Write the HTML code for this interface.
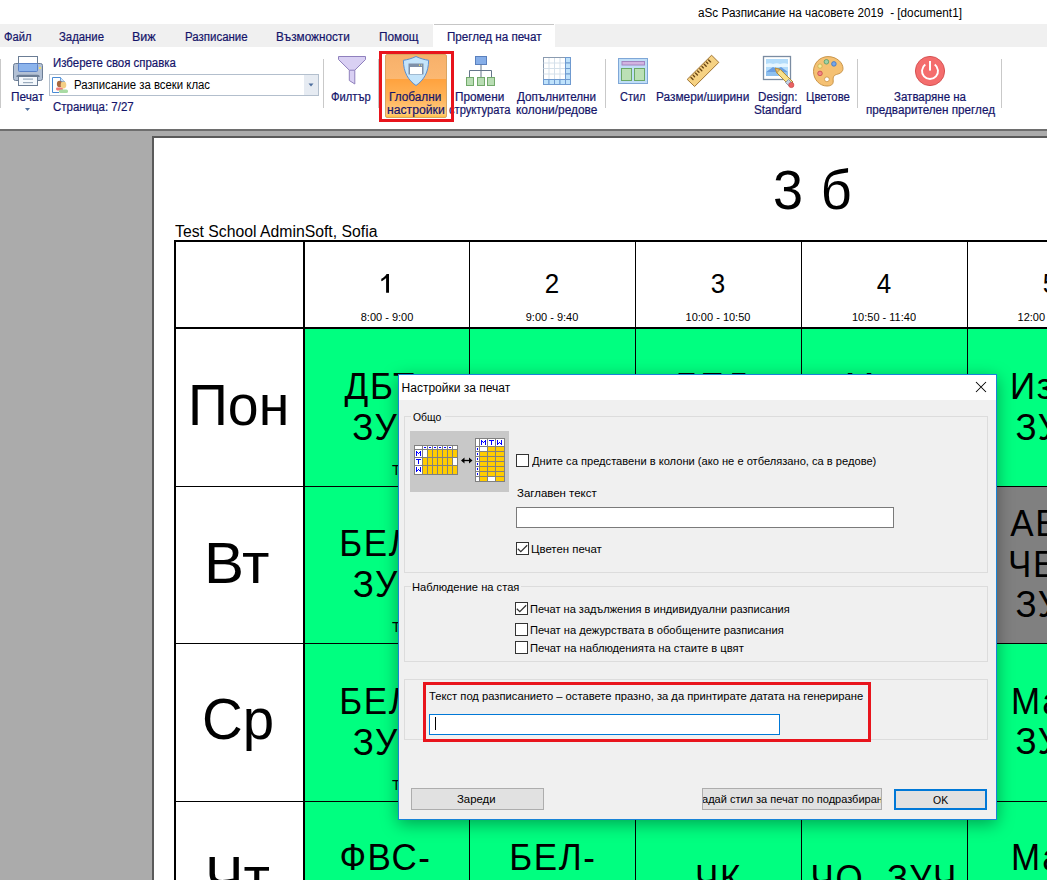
<!DOCTYPE html><html><head><meta charset="utf-8"><style>
html,body{margin:0;padding:0;}
body{width:1047px;height:880px;overflow:hidden;position:relative;background:#ababab;font-family:"Liberation Sans",sans-serif;}
div{box-sizing:border-box;}
svg{position:absolute;overflow:visible;}
.u{-webkit-text-stroke:0.2px currentColor;}
</style></head><body>
<div style="position:absolute;left:0px;top:0px;width:1047px;height:24px;background:#fff"></div>
<div style="position:absolute;left:697.62px;top:7.24px;font-size:12px;line-height:12px;color:#000;white-space:pre;letter-spacing:0px;transform:scale(0.9780,1.0);transform-origin:0 10.16px;">aSc Разписание на часовете 2019  - [document1]</div>
<div style="position:absolute;left:0px;top:24px;width:1047px;height:23px;background:#f0f0f0"></div>
<div style="position:absolute;left:433px;top:24px;width:122px;height:23px;background:#fff"></div>
<div style="position:absolute;left:434px;top:24px;width:120px;height:1px;background:#c6c6c6"></div>
<div class="u" style="position:absolute;left:3.77px;top:30.84px;font-size:12px;line-height:12px;color:#14146a;white-space:pre;letter-spacing:0px;transform:scale(0.9321,1.0);transform-origin:0 10.16px;">Файл</div>
<div class="u" style="position:absolute;left:59.25px;top:30.84px;font-size:12px;line-height:12px;color:#14146a;white-space:pre;letter-spacing:0px;transform:scale(0.9457,1.0);transform-origin:0 10.16px;">Задание</div>
<div class="u" style="position:absolute;left:131.96px;top:30.84px;font-size:12px;line-height:12px;color:#14146a;white-space:pre;letter-spacing:0px;transform:scale(1.0409,1.0);transform-origin:0 10.16px;">Виж</div>
<div class="u" style="position:absolute;left:184.64px;top:30.84px;font-size:12px;line-height:12px;color:#14146a;white-space:pre;letter-spacing:0px;transform:scale(0.9563,1.0);transform-origin:0 10.16px;">Разписание</div>
<div class="u" style="position:absolute;left:276.02px;top:30.84px;font-size:12px;line-height:12px;color:#14146a;white-space:pre;letter-spacing:0px;transform:scale(0.9797,1.0);transform-origin:0 10.16px;">Възможности</div>
<div class="u" style="position:absolute;left:378.62px;top:30.84px;font-size:12px;line-height:12px;color:#14146a;white-space:pre;letter-spacing:0px;transform:scale(0.9846,1.0);transform-origin:0 10.16px;">Помощ</div>
<div class="u" style="position:absolute;left:446.93px;top:30.84px;font-size:12px;line-height:12px;color:#14146a;white-space:pre;letter-spacing:0px;transform:scale(0.9698,1.0);transform-origin:0 10.16px;">Преглед на печат</div>
<div style="position:absolute;left:0px;top:47px;width:1047px;height:82px;background:#fff"></div>
<div style="position:absolute;left:0px;top:129px;width:1047px;height:2px;background:#6e6e6e"></div>
<div style="position:absolute;left:0px;top:59px;width:1px;height:49px;background:#c9c9c9"></div>
<div style="position:absolute;left:323px;top:59px;width:1px;height:49px;background:#c9c9c9"></div>
<div style="position:absolute;left:378px;top:59px;width:1px;height:49px;background:#c9c9c9"></div>
<div style="position:absolute;left:605px;top:59px;width:1px;height:49px;background:#c9c9c9"></div>
<div style="position:absolute;left:857px;top:59px;width:1px;height:49px;background:#c9c9c9"></div>
<div style="position:absolute;left:1001px;top:59px;width:1px;height:49px;background:#c9c9c9"></div>
<svg style="left:0;top:0" width="1047" height="130" viewBox="0 0 1047 130">
<!-- printer -->
<rect x="18.5" y="56.5" width="19" height="9" fill="#fff" stroke="#6b7d95" stroke-width="1"/>
<path d="M15.5 63.5 H40.5 Q42.5 63.5 42.5 65.5 V78.5 Q42.5 80.5 40.5 80.5 H15.5 Q13.5 80.5 13.5 78.5 V65.5 Q13.5 63.5 15.5 63.5 Z" fill="#b3c1d5" stroke="#6b7d95" stroke-width="1"/>
<rect x="18.5" y="63.5" width="19" height="8" rx="1" fill="#8cb4ec" stroke="#5a82c8" stroke-width="1"/>
<rect x="39" y="67" width="2" height="2" fill="#f3dc6a"/>
<path d="M17 77 Q17 75.5 18.5 75.5 H37.5 Q39 75.5 39 77" fill="none" stroke="#6b7d95" stroke-width="1.6"/>
<rect x="18.5" y="76.5" width="19" height="9" fill="#f4f8fc" stroke="#6b7d95" stroke-width="1"/>
<rect x="23" y="78.5" width="10" height="1.2" fill="#9aabbd"/>
<rect x="23" y="82" width="10" height="1.2" fill="#9aabbd"/>
<path d="M25 108 L30 108 L27.5 111 Z" fill="#4e6f9e"/>
<!-- combo -->
<rect x="49.5" y="74.5" width="269" height="21" fill="#fff" stroke="#b3bfcd" stroke-width="1"/>
<rect x="304" y="75" width="14" height="20" fill="#e6ebf2"/>
<path d="M308.5 83.5 L313.5 83.5 L311 86.5 Z" fill="#4e6f9e"/>
<path d="M64.5 82 L60.5 77.5 H52.5 V92.5 H59" fill="none" stroke="#4a8ad4" stroke-width="1"/>
<path d="M60.5 77.5 V81.5 H64.5" fill="#cfe4f8" stroke="#4a8ad4" stroke-width="0.8"/>
<ellipse cx="59.5" cy="84" rx="2.6" ry="3.2" fill="#a8683f"/>
<rect x="56" y="87.5" width="7" height="3" rx="1.4" fill="#f07a7a"/>
<ellipse cx="63.5" cy="85" rx="2.8" ry="3.4" fill="#f4cf86"/>
<rect x="59" y="89.5" width="9" height="3.5" rx="1.6" fill="#a8dba4"/>
<!-- funnel -->
<path d="M338.5 56.5 H365.5 V59.5 L354.8 70.2 V84 L349.3 80.5 V70.2 L338.5 59.5 Z" fill="#d9d0f3" stroke="#8f80bd" stroke-width="1" stroke-linejoin="round"/>
<path d="M349.3 70.2 H354.8" stroke="#8f80bd" stroke-width="1"/>
</svg>
<div class="u" style="position:absolute;left:11.42px;top:90.84px;font-size:12px;line-height:12px;color:#14146a;white-space:pre;letter-spacing:0px;transform:scale(0.9844,1.0);transform-origin:0 10.16px;">Печат</div>
<div class="u" style="position:absolute;left:52.55px;top:56.84px;font-size:12px;line-height:12px;color:#14146a;white-space:pre;letter-spacing:0px;transform:scale(0.9539,1.0);transform-origin:0 10.16px;">Изберете своя справка</div>
<div style="position:absolute;left:73.55px;top:78.64px;font-size:12px;line-height:12px;color:#000;white-space:pre;letter-spacing:0px;transform:scale(0.9472,1.0);transform-origin:0 10.16px;">Разписание за всеки клас</div>
<div class="u" style="position:absolute;left:52.54px;top:101.14px;font-size:12px;line-height:12px;color:#14146a;white-space:pre;letter-spacing:0px;transform:scale(0.9554,1.0);transform-origin:0 10.16px;">Страница: 7/27</div>
<div class="u" style="position:absolute;left:330.87px;top:90.84px;font-size:12px;line-height:12px;color:#14146a;white-space:pre;letter-spacing:0px;transform:scale(0.9317,1.0);transform-origin:0 10.16px;">Филтър</div>
<div style="position:absolute;left:379px;top:51px;width:75px;height:71px;border:3px solid #e8141c;z-index:5"></div>
<div style="position:absolute;left:385px;top:54px;width:62px;height:64px;border:1px solid #d9a461;border-radius:2px;background:linear-gradient(#f7b06a 0%,#fbb872 38%,#ffa23e 39%,#ffb459 70%,#ffcd85 94%,#ffc040 100%)"></div>
<svg style="left:0;top:0" width="1047" height="130" viewBox="0 0 1047 130">
<path d="M416 56.5 C420 58.5 425 59.8 428.6 60.3 C428.6 72 424 80 416 85.5 C408 80 403.4 72 403.4 60.3 C407 59.8 412 58.5 416 56.5 Z" fill="#c4e4fa" stroke="#5a8fd0" stroke-width="1"/>
<rect x="408.5" y="63.5" width="15" height="11" fill="#7f90a8"/>
<rect x="410" y="67" width="12" height="7" fill="#fff"/>
<rect x="419" y="64.5" width="1" height="1.5" fill="#e8d870"/><rect x="421" y="64.5" width="1" height="1.5" fill="#c0c8a0"/>
<!-- hierarchy -->
<rect x="475.5" y="56.5" width="11" height="8" fill="#86aee8" stroke="#5a80bd" stroke-width="1"/>
<path d="M481 64.5 V70.5 M469.5 78 V70.5 H491.5 V78 M481 70.5 V78" fill="none" stroke="#65768a" stroke-width="1"/>
<rect x="466.5" y="77.5" width="7" height="8" fill="#b9ddb4" stroke="#72a96b" stroke-width="1"/>
<rect x="477.5" y="77.5" width="7" height="8" fill="#b9ddb4" stroke="#72a96b" stroke-width="1"/>
<rect x="487.5" y="77.5" width="7" height="8" fill="#b9ddb4" stroke="#72a96b" stroke-width="1"/>
</svg>
<div class="u" style="position:absolute;left:389.32px;top:90.84px;font-size:12px;line-height:12px;color:#14146a;white-space:pre;letter-spacing:0px;transform:scale(0.9808,1.0);transform-origin:0 10.16px;">Глобални</div>
<div class="u" style="position:absolute;left:386.68px;top:103.84px;font-size:12px;line-height:12px;color:#14146a;white-space:pre;letter-spacing:0px;transform:scale(1.0164,1.0);transform-origin:0 10.16px;">настройки</div>
<div class="u" style="position:absolute;left:455.02px;top:91.04px;font-size:12px;line-height:12px;color:#14146a;white-space:pre;letter-spacing:0px;transform:scale(0.9796,1.0);transform-origin:0 10.16px;">Промени</div>
<div class="u" style="position:absolute;left:449.00px;top:104.04px;font-size:12px;line-height:12px;color:#14146a;white-space:pre;letter-spacing:0px;transform:scale(0.9303,1.0);transform-origin:0 10.16px;">структурата</div>
<div class="u" style="position:absolute;left:517.20px;top:90.84px;font-size:12px;line-height:12px;color:#14146a;white-space:pre;letter-spacing:0px;transform:scale(0.9728,1.0);transform-origin:0 10.16px;">Допълнителни</div>
<div class="u" style="position:absolute;left:516.01px;top:103.84px;font-size:12px;line-height:12px;color:#14146a;white-space:pre;letter-spacing:0px;transform:scale(0.9938,1.0);transform-origin:0 10.16px;">колони/редове</div>
<svg style="left:0;top:0" width="1047" height="130" viewBox="0 0 1047 130">
<!-- grid -->
<rect x="543.5" y="57.5" width="27" height="27" fill="#fff" stroke="#8a9bb0" stroke-width="1"/>
<g stroke="#d5e0ea" stroke-width="1">
<path d="M549 58 V79 M554.5 58 V79 M560 58 V79 M543.5 63 H565 M543.5 68.5 H565 M543.5 74 H565"/>
</g>
<g fill="#bfe2fb" stroke="#6f9ad0" stroke-width="1">
<rect x="565.5" y="57.5" width="5" height="5.5"/><rect x="565.5" y="63" width="5" height="5.5"/><rect x="565.5" y="68.5" width="5" height="5.5"/><rect x="565.5" y="74" width="5" height="5.5"/>
<rect x="543.5" y="79.5" width="5.5" height="5"/><rect x="549" y="79.5" width="5.5" height="5"/><rect x="554.5" y="79.5" width="5.5" height="5"/><rect x="560" y="79.5" width="5.5" height="5"/><rect x="565.5" y="79.5" width="5" height="5"/>
</g>
<!-- style -->
<rect x="618.5" y="58.5" width="29" height="25" fill="#c0def7" stroke="#7fa7d7" stroke-width="1"/>
<rect x="622" y="61.5" width="22.5" height="3.5" fill="#d2b3e0" stroke="#a283c0" stroke-width="1"/>
<rect x="621.5" y="68.5" width="10" height="12" fill="#bbe0b6" stroke="#6aa865" stroke-width="1"/>
<rect x="634.5" y="68.5" width="10" height="12" fill="#bbe0b6" stroke="#6aa865" stroke-width="1"/>
<!-- ruler -->
<path d="M687.2 79.4 L711.6 55.2 L718.8 62.4 L694.6 86.5 Z" fill="#f6d283" stroke="#a07432" stroke-width="1"/>
<g stroke="#6b4514" stroke-width="1.35" stroke-linecap="round">
<path d="M691 77.5 L693 79.5 M693.2 75.3 L694.6 76.7 M695.4 73.1 L697.4 75.1 M697.6 70.9 L699 72.3 M699.8 68.7 L701.8 70.7 M702 66.5 L703.4 67.9 M704.2 64.3 L706.2 66.3 M706.4 62.1 L707.8 63.5 M708.6 59.9 L710.6 61.9"/>
</g>
<!-- design picture -->
<rect x="763.5" y="56.5" width="27" height="23" fill="#fff" stroke="#7a8ca2" stroke-width="1.3"/>
<rect x="766" y="59" width="22" height="17" fill="#b3dcfa"/>
<path d="M766 64 Q770 62.5 773 64 Q777 62.5 780 64 Q784 62.5 788 64 V67 H766 Z" fill="#e6f6ff"/>
<path d="M766 72 L773 67 L777 69 L781 67 L788 72 V76 H766 Z" fill="#6a9ee0"/>
<rect x="766" y="72" width="22" height="4" fill="#8ec0ee"/>
<path d="M775.3 68.1 L780.5 69.6 L793 82 L789.5 85.5 L777 73 Z" fill="#f8e08a" stroke="#b08a3a" stroke-width="1" stroke-linejoin="round"/>
<path d="M775.3 68.1 L780 69.5 L776.7 72.8 Z" fill="#f0c070" stroke="#b08a3a" stroke-width="0.8"/>
<path d="M788.5 79.5 L792 83 L789 86 L785.5 82.5 Z" fill="#c4d4e6" stroke="#7a8ca2" stroke-width="0.8"/>
<circle cx="791.3" cy="85" r="2.6" fill="#ea6262" stroke="#c84848" stroke-width="0.7"/>
<!-- palette -->
<path d="M828 56.6 C836.5 56.6 843 62.5 843 68.5 C843 72 840 73.5 836.5 74.5 C833 75.5 833 78 833.2 81 C833.4 84.5 831 86 827 86 C819.5 86 813.5 79.5 813.5 71.3 C813.5 63 820 56.6 828 56.6 Z" fill="#f5c173" stroke="#c9954a" stroke-width="1"/>
<circle cx="826.4" cy="61.8" r="2.3" fill="#9ed0a8" stroke="#4f9a68" stroke-width="0.8"/>
<circle cx="833.9" cy="63.9" r="2.3" fill="#76a6ea" stroke="#3f73c0" stroke-width="0.8"/>
<circle cx="820" cy="66.1" r="2.2" fill="#f6ec9a" stroke="#c6b050" stroke-width="0.8"/>
<circle cx="820" cy="73.4" r="2.3" fill="#f08888" stroke="#c84848" stroke-width="0.8"/>
<circle cx="826.9" cy="79.3" r="2.4" fill="#fff" stroke="#c9954a" stroke-width="0.8"/>
<!-- power -->
<circle cx="930" cy="71" r="14.6" fill="#f46d6d" stroke="#d65353" stroke-width="1"/>
<path d="M925.3 64.6 A8 8 0 1 0 934.7 64.6" fill="none" stroke="#fff" stroke-width="1.9"/>
<rect x="929" y="61" width="2" height="9.6" fill="#fff"/>
</svg>
<div class="u" style="position:absolute;left:619.79px;top:90.64px;font-size:12px;line-height:12px;color:#14146a;white-space:pre;letter-spacing:0px;transform:scale(0.9115,1.0);transform-origin:0 10.16px;">Стил</div>
<div class="u" style="position:absolute;left:655.61px;top:90.64px;font-size:12px;line-height:12px;color:#14146a;white-space:pre;letter-spacing:0px;transform:scale(0.9892,1.0);transform-origin:0 10.16px;">Размери/ширини</div>
<div class="u" style="position:absolute;left:757.83px;top:91.04px;font-size:12px;line-height:12px;color:#14146a;white-space:pre;letter-spacing:0px;transform:scale(0.9692,1.0);transform-origin:0 10.16px;">Design:</div>
<div class="u" style="position:absolute;left:753.72px;top:104.14px;font-size:12px;line-height:12px;color:#14146a;white-space:pre;letter-spacing:0px;transform:scale(0.9766,1.0);transform-origin:0 10.16px;">Standard</div>
<div class="u" style="position:absolute;left:805.95px;top:91.04px;font-size:12px;line-height:12px;color:#14146a;white-space:pre;letter-spacing:0px;transform:scale(0.9467,1.0);transform-origin:0 10.16px;">Цветове</div>
<div class="u" style="position:absolute;left:894.04px;top:90.94px;font-size:12px;line-height:12px;color:#14146a;white-space:pre;letter-spacing:0px;transform:scale(0.9595,1.0);transform-origin:0 10.16px;">Затваряне на</div>
<div class="u" style="position:absolute;left:865.93px;top:104.14px;font-size:12px;line-height:12px;color:#14146a;white-space:pre;letter-spacing:0px;transform:scale(0.9733,1.0);transform-origin:0 10.16px;">предварителен преглед</div>
<div style="position:absolute;left:152px;top:136px;width:895px;height:744px;background:#fff;border-left:2px solid #5a5a5a;border-top:2px solid #5a5a5a"></div>
<div style="position:absolute;left:175.00px;top:224.26px;font-size:16px;line-height:16px;color:#000;white-space:pre;letter-spacing:0px;transform:scale(0.9854,1.04);transform-origin:0 13.54px;">Test School AdminSoft, Sofia</div>
<div style="position:absolute;top:163.09px;font-size:54px;line-height:54px;color:#000;white-space:pre;transform:scaleY(1.035);transform-origin:0 45.71px;left:773px;">3</div>
<div style="position:absolute;top:163.09px;font-size:54px;line-height:54px;color:#000;white-space:pre;transform:scaleY(1.035);transform-origin:0 45.71px;left:820.7px;">б</div>
<div style="position:absolute;left:305px;top:329px;width:164px;height:157px;background:#00ff80"></div>
<div style="position:absolute;left:470px;top:329px;width:165px;height:157px;background:#00ff80"></div>
<div style="position:absolute;left:636px;top:329px;width:165px;height:157px;background:#00ff80"></div>
<div style="position:absolute;left:802px;top:329px;width:165px;height:157px;background:#00ff80"></div>
<div style="position:absolute;left:968px;top:329px;width:79px;height:157px;background:#00ff80"></div>
<div style="position:absolute;left:305px;top:487px;width:164px;height:156px;background:#00ff80"></div>
<div style="position:absolute;left:470px;top:487px;width:165px;height:156px;background:#00ff80"></div>
<div style="position:absolute;left:636px;top:487px;width:165px;height:156px;background:#00ff80"></div>
<div style="position:absolute;left:802px;top:487px;width:165px;height:156px;background:#00ff80"></div>
<div style="position:absolute;left:968px;top:487px;width:79px;height:156px;background:#808080"></div>
<div style="position:absolute;left:305px;top:644px;width:164px;height:157px;background:#00ff80"></div>
<div style="position:absolute;left:470px;top:644px;width:165px;height:157px;background:#00ff80"></div>
<div style="position:absolute;left:636px;top:644px;width:165px;height:157px;background:#00ff80"></div>
<div style="position:absolute;left:802px;top:644px;width:165px;height:157px;background:#00ff80"></div>
<div style="position:absolute;left:968px;top:644px;width:79px;height:157px;background:#00ff80"></div>
<div style="position:absolute;left:305px;top:802px;width:164px;height:78px;background:#00ff80"></div>
<div style="position:absolute;left:470px;top:802px;width:165px;height:78px;background:#00ff80"></div>
<div style="position:absolute;left:636px;top:802px;width:165px;height:78px;background:#00ff80"></div>
<div style="position:absolute;left:802px;top:802px;width:165px;height:78px;background:#00ff80"></div>
<div style="position:absolute;left:968px;top:802px;width:79px;height:78px;background:#00ff80"></div>
<div style="position:absolute;left:174px;top:240px;width:873px;height:2px;background:#000"></div>
<div style="position:absolute;left:174px;top:240px;width:2px;height:640px;background:#000"></div>
<div style="position:absolute;left:176px;top:327px;width:871px;height:2px;background:#000"></div>
<div style="position:absolute;left:303px;top:242px;width:2px;height:638px;background:#000"></div>
<div style="position:absolute;left:469px;top:242px;width:1px;height:638px;background:#000"></div>
<div style="position:absolute;left:635px;top:242px;width:1px;height:638px;background:#000"></div>
<div style="position:absolute;left:801px;top:242px;width:1px;height:638px;background:#000"></div>
<div style="position:absolute;left:967px;top:242px;width:1px;height:638px;background:#000"></div>
<div style="position:absolute;left:176px;top:486px;width:871px;height:1px;background:#000"></div>
<div style="position:absolute;left:176px;top:643px;width:871px;height:1px;background:#000"></div>
<div style="position:absolute;left:176px;top:801px;width:871px;height:1px;background:#000"></div>
<div style="position:absolute;top:311.69px;font-size:11px;line-height:11px;color:#000;white-space:pre;transform:scaleY(1.04);transform-origin:0 9.31px;left:307.0px;width:160px;text-align:center;">8:00 - 9:00</div>
<div style="position:absolute;top:270.79px;font-size:26px;line-height:26px;color:#000;white-space:pre;transform:scaleY(1.04);transform-origin:0 22.01px;left:472.0px;width:160px;text-align:center;">2</div>
<div style="position:absolute;top:311.69px;font-size:11px;line-height:11px;color:#000;white-space:pre;transform:scaleY(1.04);transform-origin:0 9.31px;left:472.0px;width:160px;text-align:center;">9:00 - 9:40</div>
<div style="position:absolute;top:270.79px;font-size:26px;line-height:26px;color:#000;white-space:pre;transform:scaleY(1.04);transform-origin:0 22.01px;left:638.0px;width:160px;text-align:center;">3</div>
<div style="position:absolute;top:311.69px;font-size:11px;line-height:11px;color:#000;white-space:pre;transform:scaleY(1.04);transform-origin:0 9.31px;left:638.0px;width:160px;text-align:center;">10:00 - 10:50</div>
<div style="position:absolute;top:270.79px;font-size:26px;line-height:26px;color:#000;white-space:pre;transform:scaleY(1.04);transform-origin:0 22.01px;left:804.0px;width:160px;text-align:center;">4</div>
<div style="position:absolute;top:311.69px;font-size:11px;line-height:11px;color:#000;white-space:pre;transform:scaleY(1.04);transform-origin:0 9.31px;left:804.0px;width:160px;text-align:center;">10:50 - 11:40</div>
<div style="position:absolute;top:270.79px;font-size:26px;line-height:26px;color:#000;white-space:pre;transform:scaleY(1.04);transform-origin:0 22.01px;left:970.0px;width:160px;text-align:center;">5</div>
<div style="position:absolute;top:311.69px;font-size:11px;line-height:11px;color:#000;white-space:pre;transform:scaleY(1.04);transform-origin:0 9.31px;left:970.0px;width:160px;text-align:center;">12:00 - 12:40</div>
<svg style="left:0;top:0" width="1047" height="880" viewBox="0 0 1047 880"><path d="M386.1 292.8 V277.9 C384.8 279.2 383.1 280.4 381.3 281.2 V278.7 C383.4 277.6 385.4 276 386.6 273.9 H389 V292.8 Z" fill="#000"/></svg>
<div style="position:absolute;left:188.34px;top:378.40px;font-size:56px;line-height:56px;color:#000;white-space:pre;letter-spacing:0px;transform:scale(0.9905,1.04);transform-origin:0 47.40px;">Пон</div>
<div style="position:absolute;left:204.45px;top:536.10px;font-size:56px;line-height:56px;color:#000;white-space:pre;letter-spacing:0px;transform:scale(1.0709,1.04);transform-origin:0 47.40px;">Вт</div>
<div style="position:absolute;left:202.48px;top:692.40px;font-size:56px;line-height:56px;color:#000;white-space:pre;letter-spacing:0px;transform:scale(1.0076,1.04);transform-origin:0 47.40px;">Ср</div>
<div style="position:absolute;left:204.67px;top:850.10px;font-size:56px;line-height:56px;color:#000;white-space:pre;letter-spacing:0px;transform:scale(1.0328,1.04);transform-origin:0 47.40px;">Чт</div>
<div style="position:absolute;top:369.07px;font-size:35px;line-height:35px;color:#000;white-space:pre;transform:scaleY(1.04);transform-origin:0 29.63px;left:344.6px;letter-spacing:1.6px;">ДБТ-</div>
<div style="position:absolute;top:410.37px;font-size:35px;line-height:35px;color:#000;white-space:pre;transform:scaleY(1.04);transform-origin:0 29.63px;left:352.2px;letter-spacing:1.6px;">ЗУЧ</div>
<div style="position:absolute;top:462.95px;font-size:14px;line-height:14px;color:#000;white-space:pre;left:392px;">Т1</div>
<div style="position:absolute;top:525.97px;font-size:35px;line-height:35px;color:#000;white-space:pre;transform:scaleY(1.04);transform-origin:0 29.63px;left:339.3px;letter-spacing:1.6px;">БЕЛ-</div>
<div style="position:absolute;top:567.37px;font-size:35px;line-height:35px;color:#000;white-space:pre;transform:scaleY(1.04);transform-origin:0 29.63px;left:352.7px;letter-spacing:1.6px;">ЗУЧ</div>
<div style="position:absolute;top:619.75px;font-size:14px;line-height:14px;color:#000;white-space:pre;left:392px;">Т1</div>
<div style="position:absolute;top:684.07px;font-size:35px;line-height:35px;color:#000;white-space:pre;transform:scaleY(1.04);transform-origin:0 29.63px;left:339.3px;letter-spacing:1.6px;">БЕЛ-</div>
<div style="position:absolute;top:725.37px;font-size:35px;line-height:35px;color:#000;white-space:pre;transform:scaleY(1.04);transform-origin:0 29.63px;left:352.7px;letter-spacing:1.6px;">ЗУЧ</div>
<div style="position:absolute;top:777.65px;font-size:14px;line-height:14px;color:#000;white-space:pre;left:392px;">Т1</div>
<div style="position:absolute;top:839.97px;font-size:35px;line-height:35px;color:#000;white-space:pre;transform:scaleY(1.04);transform-origin:0 29.63px;left:339.4px;letter-spacing:1.6px;">ФВС-</div>
<div style="position:absolute;top:839.97px;font-size:35px;line-height:35px;color:#000;white-space:pre;transform:scaleY(1.04);transform-origin:0 29.63px;left:509.2px;letter-spacing:1.6px;">БЕЛ-</div>
<div style="position:absolute;top:369.07px;font-size:35px;line-height:35px;color:#000;white-space:pre;transform:scaleY(1.04);transform-origin:0 29.63px;left:675.8px;letter-spacing:1.6px;">БЕЛ-</div>
<div style="position:absolute;top:369.07px;font-size:35px;line-height:35px;color:#000;white-space:pre;transform:scaleY(1.04);transform-origin:0 29.63px;left:845px;letter-spacing:1.6px;">Мат</div>
<div style="position:absolute;top:860.87px;font-size:35px;line-height:35px;color:#000;white-space:pre;transform:scaleY(1.04);transform-origin:0 29.63px;left:695px;letter-spacing:1.6px;">ЧК</div>
<div style="position:absolute;top:860.87px;font-size:35px;line-height:35px;color:#000;white-space:pre;transform:scaleY(1.04);transform-origin:0 29.63px;left:810.5px;letter-spacing:1.6px;">ЧО, ЗУЧ</div>
<div style="position:absolute;top:369.07px;font-size:35px;line-height:35px;color:#000;white-space:pre;transform:scaleY(1.04);transform-origin:0 29.63px;left:1010px;letter-spacing:1.6px;">Изо</div>
<div style="position:absolute;top:410.37px;font-size:35px;line-height:35px;color:#000;white-space:pre;transform:scaleY(1.04);transform-origin:0 29.63px;left:1015.5px;letter-spacing:1.6px;">ЗУЧ</div>
<div style="position:absolute;top:505.97px;font-size:35px;line-height:35px;color:#000;white-space:pre;transform:scaleY(1.04);transform-origin:0 29.63px;left:1010.3px;letter-spacing:1.6px;">АВ</div>
<div style="position:absolute;top:547.07px;font-size:35px;line-height:35px;color:#000;white-space:pre;transform:scaleY(1.04);transform-origin:0 29.63px;left:1008px;letter-spacing:1.6px;">ЧЕ</div>
<div style="position:absolute;top:586.57px;font-size:35px;line-height:35px;color:#000;white-space:pre;transform:scaleY(1.04);transform-origin:0 29.63px;left:1015.5px;letter-spacing:1.6px;">ЗУЧ</div>
<div style="position:absolute;top:683.57px;font-size:35px;line-height:35px;color:#000;white-space:pre;transform:scaleY(1.04);transform-origin:0 29.63px;left:1011.1px;letter-spacing:1.6px;">Мат</div>
<div style="position:absolute;top:724.37px;font-size:35px;line-height:35px;color:#000;white-space:pre;transform:scaleY(1.04);transform-origin:0 29.63px;left:1015.5px;letter-spacing:1.6px;">ЗУЧ</div>
<div style="position:absolute;top:840.37px;font-size:35px;line-height:35px;color:#000;white-space:pre;transform:scaleY(1.04);transform-origin:0 29.63px;left:1011.1px;letter-spacing:1.6px;">Мат</div>
<div style="position:absolute;left:398px;top:374px;width:599px;height:446px;background:#f0f0f0;border:1px solid #1883d7;box-shadow:0 4px 16px rgba(0,0,0,0.36);z-index:10"></div>
<div style="position:absolute;left:0;top:0;width:1047px;height:880px;z-index:11">
<div style="position:absolute;left:399px;top:375px;width:597px;height:25px;background:#fff"></div>
<div style="position:absolute;left:401.60px;top:381.84px;font-size:12px;line-height:12px;color:#000;white-space:pre;letter-spacing:0px;">Настройки за печат</div>
<svg style="left:0;top:0" width="1047" height="880" viewBox="0 0 1047 880">
<path d="M976 382 L986 392 M986 382 L976 392" stroke="#000" stroke-width="1.05"/>
</svg><div style="position:absolute;left:404px;top:416px;width:584px;height:157px;border:1px solid #dcdcdc"></div>
<div style="position:absolute;left:411px;top:410px;width:34px;height:12px;background:#f0f0f0"></div>
<div style="position:absolute;left:412.90px;top:411.59px;font-size:11px;line-height:11px;color:#000;white-space:pre;letter-spacing:0px;transform:scale(0.9467,1.0);transform-origin:0 9.31px;">Общо</div>
<div style="position:absolute;left:404px;top:586px;width:584px;height:76px;border:1px solid #dcdcdc"></div>
<div style="position:absolute;left:411px;top:580px;width:110px;height:12px;background:#f0f0f0"></div>
<div style="position:absolute;left:411.99px;top:581.59px;font-size:11px;line-height:11px;color:#000;white-space:pre;letter-spacing:0px;transform:scale(1.0135,1.0);transform-origin:0 9.31px;">Наблюдение на стая</div>
<div style="position:absolute;left:404px;top:679px;width:584px;height:61px;border:1px solid #dcdcdc"></div>
<div style="position:absolute;left:410px;top:431px;width:99px;height:61px;background:#c8c8c8"></div>
<svg style="left:0;top:0" width="1047" height="880" viewBox="0 0 1047 880" shape-rendering="crispEdges"><rect x="414" y="445" width="44" height="30" fill="#808080"/><rect x="415" y="446" width="7" height="3" fill="#ffffff"/><rect x="423" y="446" width="4" height="3" fill="#ffffff"/><rect x="428" y="446" width="4" height="3" fill="#ffffff"/><rect x="433" y="446" width="4" height="3" fill="#ffffff"/><rect x="438" y="446" width="4" height="3" fill="#ffffff"/><rect x="443" y="446" width="4" height="3" fill="#ffffff"/><rect x="448" y="446" width="4" height="3" fill="#ffffff"/><rect x="453" y="446" width="4" height="3" fill="#ffffff"/><rect x="415" y="450" width="7" height="7" fill="#ffffff"/><rect x="423" y="450" width="4" height="7" fill="#ffffff"/><rect x="428" y="450" width="4" height="7" fill="#ffcc00"/><rect x="433" y="450" width="4" height="7" fill="#ffcc00"/><rect x="438" y="450" width="4" height="7" fill="#ffcc00"/><rect x="443" y="450" width="4" height="7" fill="#ffcc00"/><rect x="448" y="450" width="4" height="7" fill="#ffcc00"/><rect x="453" y="450" width="4" height="7" fill="#ffcc00"/><rect x="415" y="458" width="7" height="7" fill="#ffffff"/><rect x="423" y="458" width="4" height="7" fill="#ffcc00"/><rect x="428" y="458" width="4" height="7" fill="#ffcc00"/><rect x="433" y="458" width="4" height="7" fill="#ffcc00"/><rect x="438" y="458" width="4" height="7" fill="#ffcc00"/><rect x="443" y="458" width="4" height="7" fill="#ffcc00"/><rect x="448" y="458" width="4" height="7" fill="#ffcc00"/><rect x="453" y="458" width="4" height="7" fill="#ffffff"/><rect x="415" y="466" width="7" height="8" fill="#ffffff"/><rect x="423" y="466" width="4" height="8" fill="#ffcc00"/><rect x="428" y="466" width="4" height="8" fill="#ffcc00"/><rect x="433" y="466" width="4" height="8" fill="#ffcc00"/><rect x="438" y="466" width="4" height="8" fill="#ffcc00"/><rect x="443" y="466" width="4" height="8" fill="#ffcc00"/><rect x="448" y="466" width="4" height="8" fill="#ffcc00"/><rect x="453" y="466" width="4" height="8" fill="#ffcc00"/><rect x="424" y="447" width="2" height="1" fill="#0000ff"/><rect x="429" y="447" width="2" height="1" fill="#0000ff"/><rect x="434" y="447" width="2" height="1" fill="#0000ff"/><rect x="439" y="447" width="2" height="1" fill="#0000ff"/><rect x="444" y="447" width="2" height="1" fill="#0000ff"/><rect x="449" y="447" width="2" height="1" fill="#0000ff"/><rect x="416" y="451" width="1" height="1" fill="#0000ff"/><rect x="420" y="451" width="1" height="1" fill="#0000ff"/><rect x="416" y="452" width="1" height="1" fill="#0000ff"/><rect x="417" y="452" width="1" height="1" fill="#0000ff"/><rect x="419" y="452" width="1" height="1" fill="#0000ff"/><rect x="420" y="452" width="1" height="1" fill="#0000ff"/><rect x="416" y="453" width="1" height="1" fill="#0000ff"/><rect x="418" y="453" width="1" height="1" fill="#0000ff"/><rect x="420" y="453" width="1" height="1" fill="#0000ff"/><rect x="416" y="454" width="1" height="1" fill="#0000ff"/><rect x="420" y="454" width="1" height="1" fill="#0000ff"/><rect x="416" y="455" width="1" height="1" fill="#0000ff"/><rect x="420" y="455" width="1" height="1" fill="#0000ff"/><rect x="416" y="459" width="1" height="1" fill="#0000ff"/><rect x="417" y="459" width="1" height="1" fill="#0000ff"/><rect x="418" y="459" width="1" height="1" fill="#0000ff"/><rect x="419" y="459" width="1" height="1" fill="#0000ff"/><rect x="420" y="459" width="1" height="1" fill="#0000ff"/><rect x="418" y="460" width="1" height="1" fill="#0000ff"/><rect x="418" y="461" width="1" height="1" fill="#0000ff"/><rect x="418" y="462" width="1" height="1" fill="#0000ff"/><rect x="418" y="463" width="1" height="1" fill="#0000ff"/><rect x="416" y="467" width="1" height="1" fill="#0000ff"/><rect x="420" y="467" width="1" height="1" fill="#0000ff"/><rect x="416" y="468" width="1" height="1" fill="#0000ff"/><rect x="420" y="468" width="1" height="1" fill="#0000ff"/><rect x="416" y="469" width="1" height="1" fill="#0000ff"/><rect x="418" y="469" width="1" height="1" fill="#0000ff"/><rect x="420" y="469" width="1" height="1" fill="#0000ff"/><rect x="416" y="470" width="1" height="1" fill="#0000ff"/><rect x="417" y="470" width="1" height="1" fill="#0000ff"/><rect x="419" y="470" width="1" height="1" fill="#0000ff"/><rect x="420" y="470" width="1" height="1" fill="#0000ff"/><rect x="416" y="471" width="1" height="1" fill="#0000ff"/><rect x="420" y="471" width="1" height="1" fill="#0000ff"/><rect x="475" y="438" width="30" height="44" fill="#808080"/><rect x="476" y="439" width="3" height="7" fill="#ffffff"/><rect x="480" y="439" width="7" height="7" fill="#ffffff"/><rect x="488" y="439" width="7" height="7" fill="#ffffff"/><rect x="496" y="439" width="8" height="7" fill="#ffffff"/><rect x="476" y="447" width="3" height="4" fill="#ffffff"/><rect x="480" y="447" width="7" height="4" fill="#ffffff"/><rect x="488" y="447" width="7" height="4" fill="#ffcc00"/><rect x="496" y="447" width="8" height="4" fill="#ffcc00"/><rect x="476" y="452" width="3" height="4" fill="#ffffff"/><rect x="480" y="452" width="7" height="4" fill="#ffcc00"/><rect x="488" y="452" width="7" height="4" fill="#ffcc00"/><rect x="496" y="452" width="8" height="4" fill="#ffcc00"/><rect x="476" y="457" width="3" height="4" fill="#ffffff"/><rect x="480" y="457" width="7" height="4" fill="#ffcc00"/><rect x="488" y="457" width="7" height="4" fill="#ffcc00"/><rect x="496" y="457" width="8" height="4" fill="#ffcc00"/><rect x="476" y="462" width="3" height="4" fill="#ffffff"/><rect x="480" y="462" width="7" height="4" fill="#ffcc00"/><rect x="488" y="462" width="7" height="4" fill="#ffcc00"/><rect x="496" y="462" width="8" height="4" fill="#ffcc00"/><rect x="476" y="467" width="3" height="4" fill="#ffffff"/><rect x="480" y="467" width="7" height="4" fill="#ffcc00"/><rect x="488" y="467" width="7" height="4" fill="#ffcc00"/><rect x="496" y="467" width="8" height="4" fill="#ffcc00"/><rect x="476" y="472" width="3" height="4" fill="#ffffff"/><rect x="480" y="472" width="7" height="4" fill="#ffcc00"/><rect x="488" y="472" width="7" height="4" fill="#ffcc00"/><rect x="496" y="472" width="8" height="4" fill="#ffcc00"/><rect x="476" y="477" width="3" height="4" fill="#ffffff"/><rect x="480" y="477" width="7" height="4" fill="#ffcc00"/><rect x="488" y="477" width="7" height="4" fill="#ffffff"/><rect x="496" y="477" width="8" height="4" fill="#ffcc00"/><rect x="477" y="448" width="1" height="2" fill="#0000ff"/><rect x="477" y="453" width="1" height="2" fill="#0000ff"/><rect x="477" y="458" width="1" height="2" fill="#0000ff"/><rect x="477" y="463" width="1" height="2" fill="#0000ff"/><rect x="477" y="468" width="1" height="2" fill="#0000ff"/><rect x="477" y="473" width="1" height="2" fill="#0000ff"/><rect x="481" y="440" width="1" height="1" fill="#0000ff"/><rect x="485" y="440" width="1" height="1" fill="#0000ff"/><rect x="481" y="441" width="1" height="1" fill="#0000ff"/><rect x="482" y="441" width="1" height="1" fill="#0000ff"/><rect x="484" y="441" width="1" height="1" fill="#0000ff"/><rect x="485" y="441" width="1" height="1" fill="#0000ff"/><rect x="481" y="442" width="1" height="1" fill="#0000ff"/><rect x="483" y="442" width="1" height="1" fill="#0000ff"/><rect x="485" y="442" width="1" height="1" fill="#0000ff"/><rect x="481" y="443" width="1" height="1" fill="#0000ff"/><rect x="485" y="443" width="1" height="1" fill="#0000ff"/><rect x="481" y="444" width="1" height="1" fill="#0000ff"/><rect x="485" y="444" width="1" height="1" fill="#0000ff"/><rect x="489" y="440" width="1" height="1" fill="#0000ff"/><rect x="490" y="440" width="1" height="1" fill="#0000ff"/><rect x="491" y="440" width="1" height="1" fill="#0000ff"/><rect x="492" y="440" width="1" height="1" fill="#0000ff"/><rect x="493" y="440" width="1" height="1" fill="#0000ff"/><rect x="491" y="441" width="1" height="1" fill="#0000ff"/><rect x="491" y="442" width="1" height="1" fill="#0000ff"/><rect x="491" y="443" width="1" height="1" fill="#0000ff"/><rect x="491" y="444" width="1" height="1" fill="#0000ff"/><rect x="497" y="440" width="1" height="1" fill="#0000ff"/><rect x="501" y="440" width="1" height="1" fill="#0000ff"/><rect x="497" y="441" width="1" height="1" fill="#0000ff"/><rect x="501" y="441" width="1" height="1" fill="#0000ff"/><rect x="497" y="442" width="1" height="1" fill="#0000ff"/><rect x="499" y="442" width="1" height="1" fill="#0000ff"/><rect x="501" y="442" width="1" height="1" fill="#0000ff"/><rect x="497" y="443" width="1" height="1" fill="#0000ff"/><rect x="498" y="443" width="1" height="1" fill="#0000ff"/><rect x="500" y="443" width="1" height="1" fill="#0000ff"/><rect x="501" y="443" width="1" height="1" fill="#0000ff"/><rect x="497" y="444" width="1" height="1" fill="#0000ff"/><rect x="501" y="444" width="1" height="1" fill="#0000ff"/></svg>
<svg style="left:0;top:0" width="1047" height="880" viewBox="0 0 1047 880">
<path d="M462.5 460.5 H471" stroke="#000" stroke-width="1.3"/>
<path d="M461 460.5 L464.5 457.5 V463.5 Z M472.5 460.5 L469 457.5 V463.5 Z" fill="#000"/>
</svg>
<div style="position:absolute;left:516px;top:454px;width:13px;height:13px;border:1px solid #333;background:#fff"></div>
<div style="position:absolute;left:532.40px;top:456.49px;font-size:11px;line-height:11px;color:#000;white-space:pre;letter-spacing:0px;transform:scale(1.0106,1.0);transform-origin:0 9.31px;">Дните са представени в колони (ако не е отбелязано, са в редове)</div>
<div style="position:absolute;left:516.86px;top:487.69px;font-size:11px;line-height:11px;color:#000;white-space:pre;letter-spacing:0px;transform:scale(1.0413,1.0);transform-origin:0 9.31px;">Заглавен текст</div>
<div style="position:absolute;left:516px;top:507px;width:378px;height:21px;border:1px solid #7a7a7a;background:#fff"></div>
<div style="position:absolute;left:516px;top:542px;width:13px;height:13px;border:1px solid #333;background:#fff"></div>
<svg style="left:516px;top:542px" width="13" height="13" viewBox="0 0 13 13"><path d="M1.8 6.8 L4.8 9.6 L11.2 3.2" fill="none" stroke="#333" stroke-width="1.25"/></svg>
<div style="position:absolute;left:531.26px;top:543.99px;font-size:11px;line-height:11px;color:#000;white-space:pre;letter-spacing:0px;transform:scale(1.0388,1.0);transform-origin:0 9.31px;">Цветен печат</div>
<div style="position:absolute;left:515px;top:602px;width:13px;height:13px;border:1px solid #333;background:#fff"></div>
<svg style="left:515px;top:602px" width="13" height="13" viewBox="0 0 13 13"><path d="M1.8 6.8 L4.8 9.6 L11.2 3.2" fill="none" stroke="#333" stroke-width="1.25"/></svg>
<div style="position:absolute;left:529.69px;top:604.39px;font-size:11px;line-height:11px;color:#000;white-space:pre;letter-spacing:0px;transform:scale(1.0054,1.0);transform-origin:0 9.31px;">Печат на задължения в индивидуални разписания</div>
<div style="position:absolute;left:515px;top:623px;width:13px;height:13px;border:1px solid #333;background:#fff"></div>
<div style="position:absolute;left:529.69px;top:625.49px;font-size:11px;line-height:11px;color:#000;white-space:pre;letter-spacing:0px;transform:scale(1.0133,1.0);transform-origin:0 9.31px;">Печат на дежурствата в обобщените разписания</div>
<div style="position:absolute;left:515px;top:641px;width:13px;height:13px;border:1px solid #333;background:#fff"></div>
<div style="position:absolute;left:529.68px;top:642.59px;font-size:11px;line-height:11px;color:#000;white-space:pre;letter-spacing:0px;transform:scale(1.0191,1.0);transform-origin:0 9.31px;">Печат на наблюденията на стаите в цвят</div>
<div style="position:absolute;left:423px;top:682px;width:448px;height:60px;border:3px solid #e8141c"></div>
<div style="position:absolute;left:429.40px;top:691.49px;font-size:11px;line-height:11px;color:#000;white-space:pre;letter-spacing:0px;transform:scale(1.0183,1.0);transform-origin:0 9.31px;">Текст под разписанието – оставете празно, за да принтирате датата на генериране</div>
<div style="position:absolute;left:429px;top:714px;width:351px;height:21px;border:1px solid #0078d7;background:#fff"></div>
<div style="position:absolute;left:435px;top:717px;width:1px;height:13px;background:#000"></div>
<div style="position:absolute;left:411px;top:788px;width:133px;height:22px;border:1px solid #adadad;background:#e1e1e1"></div>
<div style="position:absolute;left:457.27px;top:793.89px;font-size:11px;line-height:11px;color:#000;white-space:pre;letter-spacing:0px;transform:scale(1.0333,1.0);transform-origin:0 9.31px;">Зареди</div>
<div style="position:absolute;left:702px;top:788px;width:180px;height:22px;border:1px solid #adadad;background:#e1e1e1;overflow:hidden"><div style="position:absolute;left:-20px;width:220px;top:5.19px;font-size:11px;line-height:11px;text-align:center;white-space:pre;color:#000">задай стил за печат по подразбиране</div></div>
<div style="position:absolute;left:894px;top:789px;width:93px;height:21px;border:2px solid #0078d7;background:#e1e1e1"></div>
<div style="position:absolute;left:932.70px;top:795.09px;font-size:11px;line-height:11px;color:#000;white-space:pre;letter-spacing:0px;transform:scale(0.9533,1.0);transform-origin:0 9.31px;">OK</div>
</div>
</body></html>
